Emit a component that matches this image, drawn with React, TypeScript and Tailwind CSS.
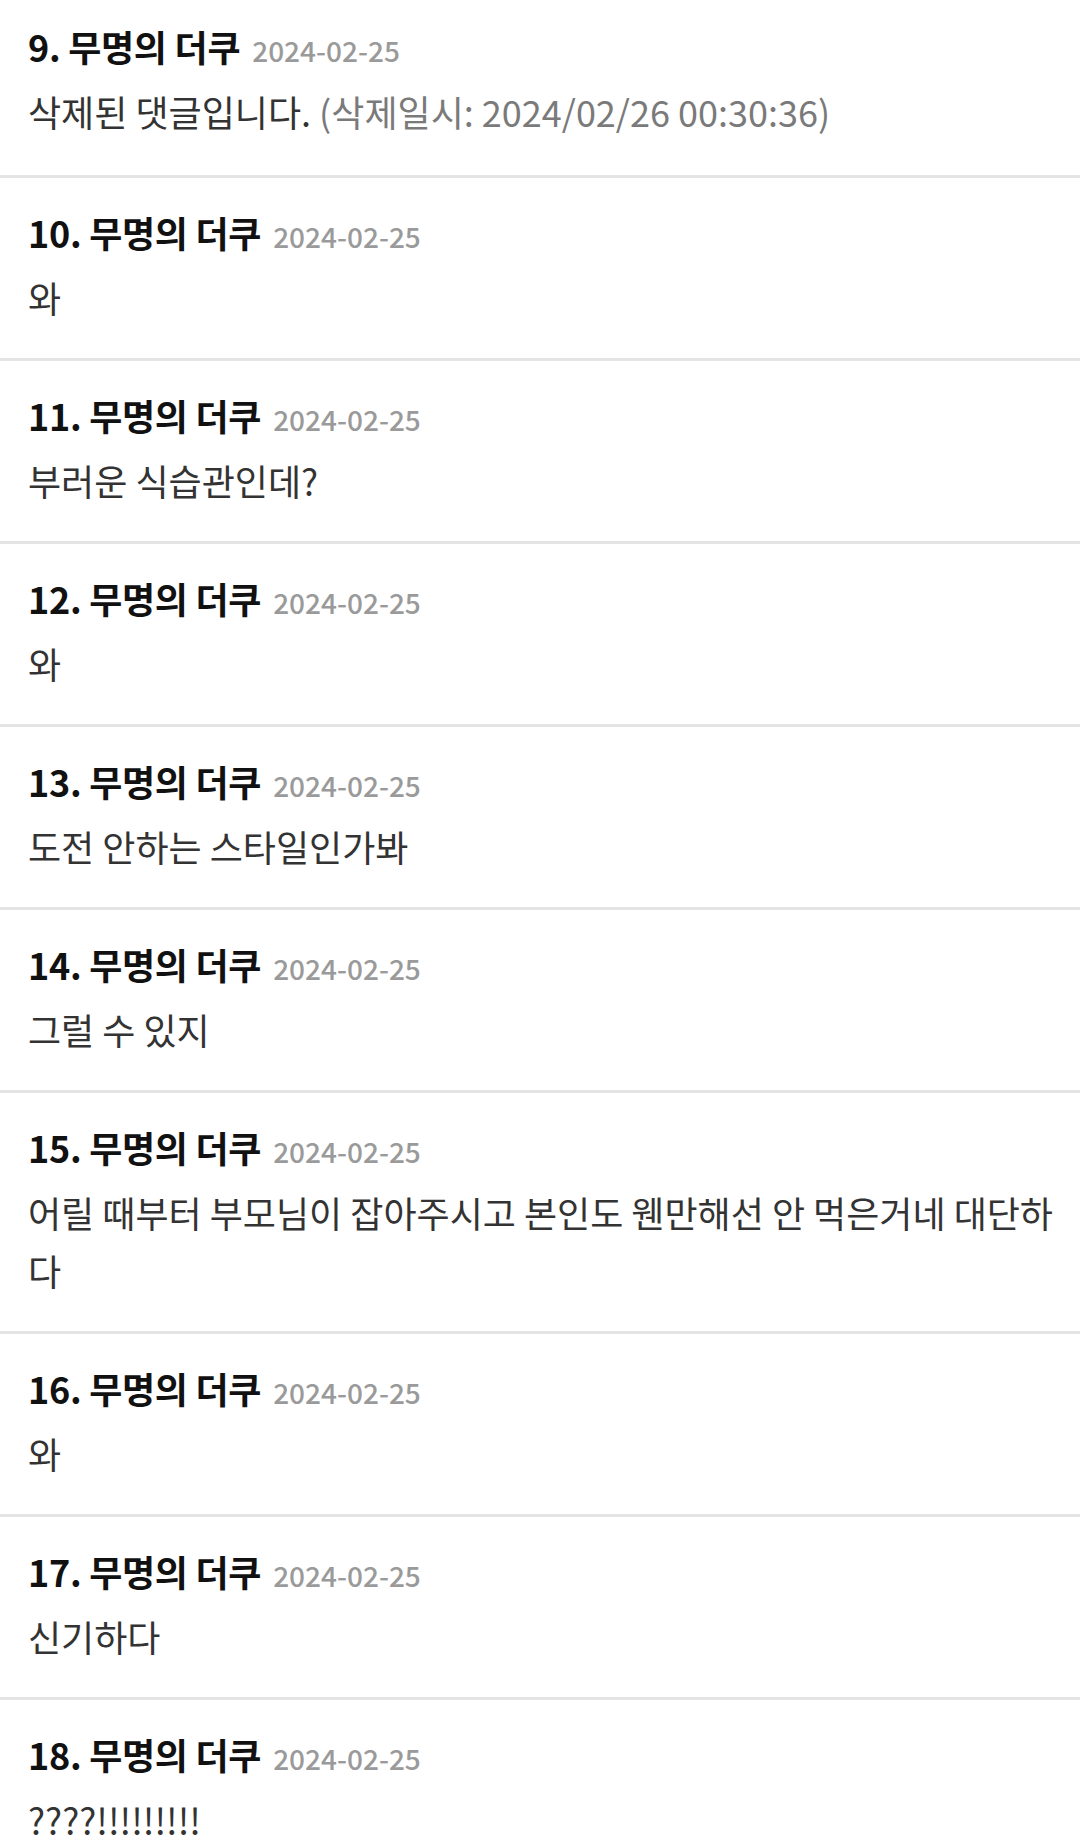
const comments = [
  { no: 9, body: '삭제된 댓글입니다.', deletedAt: '2024/02/26 00:30:36' },
  { no: 10, body: '와' },
  { no: 11, body: '부러운 식습관인데?' },
  { no: 12, body: '와' },
  { no: 13, body: '도전 안하는 스타일인가봐' },
  { no: 14, body: '그럴 수 있지' },
  { no: 15, body: '어릴 때부터 부모님이 잡아주시고 본인도 웬만해선 안 먹은거네 대단하다' },
  { no: 16, body: '와' },
  { no: 17, body: '신기하다' },
  { no: 18, body: '????!!!!!!!!!' },
];

export default function App() {
  return (
    <div
      className="w-[1080px] bg-white text-[#222]"
      style={{ fontFamily: '"Noto Sans CJK KR", "Noto Sans", sans-serif' }}
    >
      {comments.map((c, i) => (
        <div
          key={c.no}
          className={
            i === 0
              ? 'border-b-[3px] border-[#e4e4e4] pl-[28px] pr-[16px] pt-[24px] pb-[35px]'
              : 'border-b-[3px] border-[#e4e4e4] pl-[28px] pr-[16px] pt-[32px] pb-[32px]'
          }
        >
          <div className="flex items-baseline h-[44px] leading-[44px]">
            <span className="text-[36px] font-bold text-[#111] tracking-[-0.3px]">
              {c.no}. 무명의 더쿠
            </span>
            <span className="ml-[12px] text-[28px] font-medium text-[#9a9a9a]">2024-02-25</span>
          </div>
          <p className="mt-[14px] text-[36px] leading-[58px] text-[#333]">
            {c.body}
            {c.deletedAt && (
              <span className="text-[#7a7a7a]"> (삭제일시: {c.deletedAt})</span>
            )}
          </p>
        </div>
      ))}
    </div>
  );
}
